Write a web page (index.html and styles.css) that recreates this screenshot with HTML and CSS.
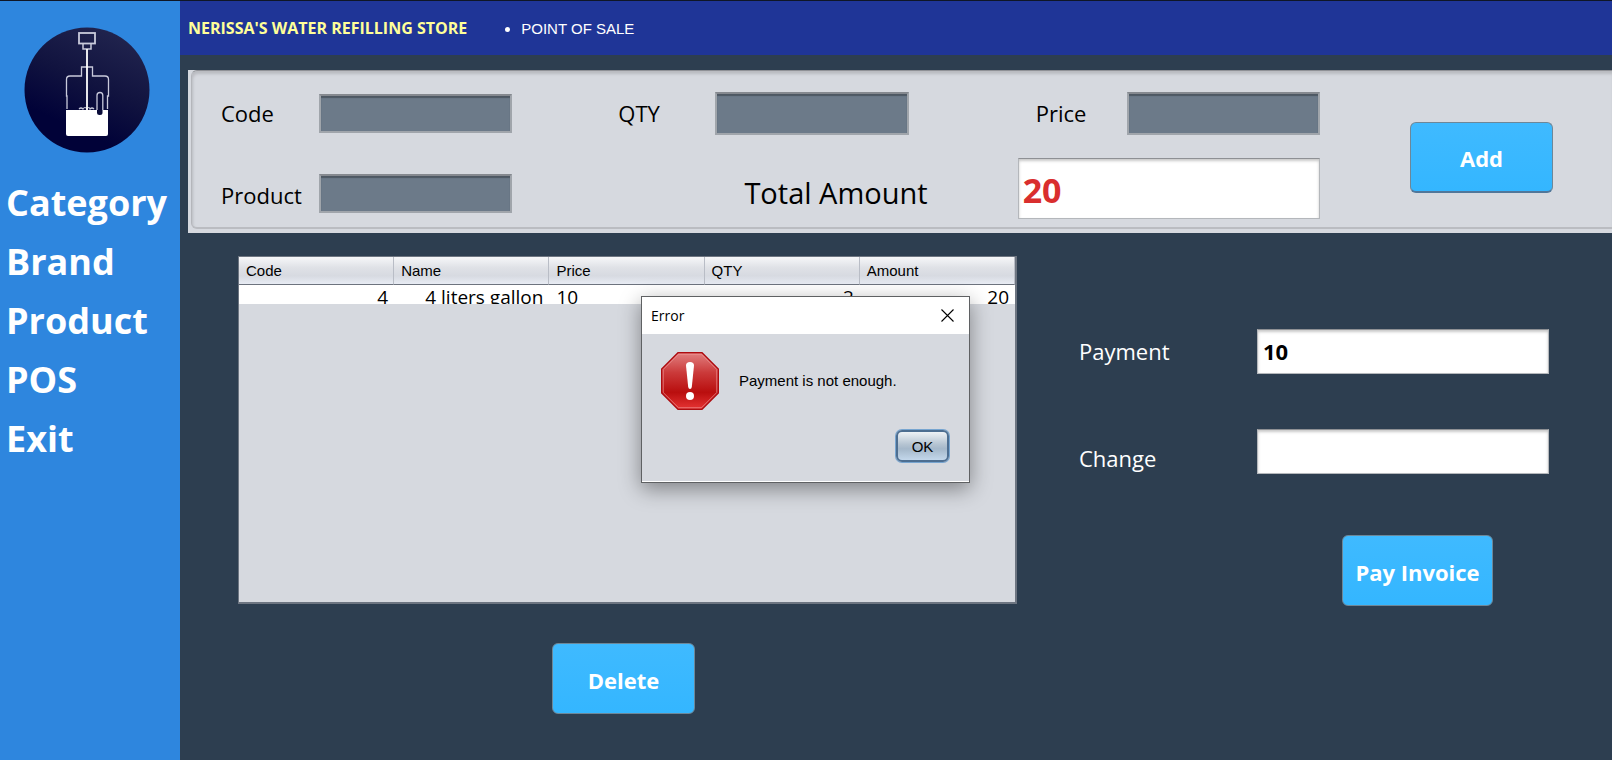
FILE: index.html
```html
<!DOCTYPE html>
<html lang="en">
<head>
<meta charset="utf-8">
<meta name="viewport" content="width=device-width, initial-scale=1">
<title>Nerissa's Water Refilling Store - Point of Sale</title>
<link rel="stylesheet" href="styles.css">
</head>
<body>
<div class="app">
  <aside class="sidebar">
    <svg class="logo" viewBox="0 0 126 126" role="img" aria-label="Water refilling store logo">
      <defs>
        <linearGradient id="disc" x1="0.75" y1="0" x2="0.3" y2="1">
          <stop offset="0" stop-color="#22254f"/>
          <stop offset="0.45" stop-color="#11133f"/>
          <stop offset="0.8" stop-color="#010238"/>
          <stop offset="1" stop-color="#010238"/>
        </linearGradient>
      </defs>
      <circle cx="63" cy="63" r="62.500" fill="url(#disc)"/>
      <g fill="none" stroke="#c9cadb">
        <rect x="55" y="6" width="16" height="10.500" stroke-width="1.800"/>
        <path d="M59 17v5h8v-5" stroke-width="1.500"/>
        <path d="M43 82V69H42.500V52.500Q42.500 49 46 49H57.500V40H68.500V49H81Q84.500 49 84.500 52.500V69H83.500V82" stroke-width="1.300"/>
        <path d="M55 82q2-2 4 0q2-3 4 0q2-3 3 0q2-2 4 0" stroke-width="1.200"/>
      </g>
      <path d="M42 83H84V107Q84 109 82 109H44Q42 109 42 107Z" fill="#fff"/>
      <path d="M63 22V83" stroke="#fff" stroke-width="1.800"/>
      <rect x="73" y="66" width="5.500" height="22" rx="2.500" fill="#090b39"/>
      <path d="M73 83V68.500Q73 65.500 76 65.500Q78.800 65.500 78.800 68.500V83" fill="none" stroke="#c9cadb" stroke-width="1.300"/>
    </svg>
    <nav class="menu">
      <a href="#category">Category</a>
      <a href="#brand">Brand</a>
      <a href="#product">Product</a>
      <a href="#pos">POS</a>
      <a href="#exit">Exit</a>
    </nav>
  </aside>

  <main class="main">
    <header class="topbar">
      <h1 class="store">NERISSA'S WATER REFILLING STORE</h1>
      <ul class="crumbs"><li>POINT OF SALE</li></ul>
    </header>

    <form class="entry">
      <div class="entry-grid">
        <label class="label" for="code">Code</label>
        <input class="box box-dim" id="code" type="text">
        <label class="label col-qty" for="qty">QTY</label>
        <input class="box box-dim box-tall" id="qty" type="text">
        <label class="label col-price" for="price">Price</label>
        <input class="box box-dim box-tall" id="price" type="text">
        <label class="label row-low-label" for="product-name">Product</label>
        <input class="box box-dim row-low" id="product-name" type="text">
        <div class="total">
          <label class="total-label" for="total">Total Amount</label>
          <input class="box box-total" id="total" type="text" value="20">
        </div>
      </div>
      <button class="btn btn-add" type="button">Add</button>
    </form>

    <div class="work">
      <section class="cart">
        <div class="table-pane">
          <table class="items">
            <thead>
              <tr><th>Code</th><th>Name</th><th>Price</th><th>QTY</th><th>Amount</th></tr>
            </thead>
            <tbody>
              <tr>
                <td><div class="cell num">4</div></td>
                <td><div class="cell num">4 liters gallon</div></td>
                <td><div class="cell">10</div></td>
                <td><div class="cell num">2</div></td>
                <td><div class="cell num">20</div></td>
              </tr>
            </tbody>
          </table>
        </div>
        <button class="btn" type="button">Delete</button>
      </section>

      <form class="pay">
        <div class="pay-row">
          <label class="label" for="payment">Payment</label>
          <input class="box box-pay" id="payment" type="text" value="10">
        </div>
        <div class="pay-row pay-change">
          <label class="label" for="change">Change</label>
          <input class="box box-pay" id="change" type="text">
        </div>
        <button class="btn btn-invoice" type="button">Pay Invoice</button>
      </form>
    </div>
  </main>

  <div class="dialog" role="alertdialog" aria-labelledby="dlg-title" aria-describedby="dlg-text">
    <div class="dialog-bar">
      <h2 class="dialog-title" id="dlg-title">Error</h2>
      <button class="dialog-close" type="button" aria-label="Close">
        <svg viewBox="0 0 13 13" width="13" height="13"><path d="M.5.5l12 12M12.500.5l-12 12" stroke="#000" stroke-width="1.100"/></svg>
      </button>
    </div>
    <div class="dialog-body">
      <svg class="dialog-icon" viewBox="0 0 58 58" aria-hidden="true">
        <defs>
          <linearGradient id="red" x1="0" y1="0" x2="0" y2="1">
            <stop offset="0" stop-color="#e18080"/>
            <stop offset="0.35" stop-color="#cb3a3a"/>
            <stop offset="0.7" stop-color="#b90e0e"/>
            <stop offset="1" stop-color="#e63434"/>
          </linearGradient>
        </defs>
        <path d="M17 .7H41L57.300 17V41L41 57.300H17L.7 41V17Z" fill="url(#red)" stroke="#ae0c10" stroke-width="1.400"/>
        <path d="M17.500 2.200H40.500L55.800 17.500V40.500L40.500 55.800H17.500L2.200 40.500V17.500Z" fill="none" stroke="#f09a9a" stroke-opacity=".7"/>
        <path d="M25 13.500Q25 10 29 10Q33 10 33 13.500L30.800 35Q30.500 37 29 37Q27.500 37 27.200 35Z" fill="#fff"/>
        <circle cx="29" cy="44" r="4" fill="#fff"/>
      </svg>
      <p class="dialog-text" id="dlg-text">Payment is not enough.</p>
      <button class="dialog-ok" type="button">OK</button>
    </div>
  </div>
</div>
</body>
</html>
```

FILE: styles.css
```css
* {
  box-sizing: border-box;
}

body {
  margin: 0;
  background: #2d3e50;
  font-family: "Open Sans", "Noto Sans", sans-serif;
  color: #000;
}

button,
input {
  font-family: inherit;
  color: inherit;
}

.app {
  position: relative;
  display: flex;
  min-height: 100vh;
  border-top: 1px solid #0f1626;
}

/* Sidebar */
.sidebar {
  flex: 0 0 180px;
  padding-top: 26px;
  background: #2e86de;
}

.logo {
  display: block;
  width: 126px;
  margin: 0 0 20px 24px;
}

.menu {
  display: flex;
  flex-direction: column;
  padding-left: 6px;
}

.menu a {
  font-size: 36px;
  line-height: 59px;
  font-weight: 700;
  color: #fff;
  text-decoration: none;
}

/* Top bar */
.main {
  flex: 1;
  min-width: 0;
}

.topbar {
  display: flex;
  align-items: center;
  gap: 54px;
  height: 54px;
  padding-left: 8px;
  background: #1f3597;
}

.store {
  margin: 0;
  font-size: 16px;
  font-weight: 700;
  color: #ffff99;
}

.crumbs {
  margin: 0;
  padding: 0;
  font: 15px "Liberation Sans", sans-serif;
  color: #fff;
}

/* Entry panel */
.entry {
  display: flex;
  gap: 90px;
  margin: 15px 0 0 8px;
  padding: 22px 59px 14px 33px;
  position: relative;
  background: #d6d9df;
}

.entry::before {
  content: "";
  position: absolute;
  inset: 0 0 4px 3px;
  border: 1px solid #b4b6bb;
  border-top-color: #8f9196;
  border-right: 0;
  border-bottom: 2px solid #babcc1;
  border-radius: 6px 0 0 6px;
  box-shadow: inset 1px 3px 3px #b9bbc0;
  pointer-events: none;
}

.entry-grid {
  flex: 1;
  min-width: 0;
  display: grid;
  grid-template-columns: 98px minmax(0, 1fr) 203px minmax(0, 1fr) 218px minmax(0, 1fr);
  grid-template-rows: 43px 62px;
  row-gap: 22px;
  align-items: center;
}

.label {
  padding-bottom: 2px;
  font-size: 22px;
  line-height: 30px;
}

.col-qty {
  padding-left: 106px;
}

.col-price {
  padding-left: 127px;
}

.row-low {
  margin-top: 10px;
}

.row-low-label {
  padding-top: 16px;
}

.box {
  display: block;
  width: 100%;
  min-width: 0;
  padding: 0 5px;
  border: 1px solid #b4b7bb;
  border-top-color: #8e9094;
  border-radius: 0;
  outline: 0;
  background: #fff;
  font-weight: 700;
  box-shadow: inset 0 2px 3px #c8c8c8;
}

.box-dim {
  height: 39px;
  border: 2px solid #a0a5ab;
  border-top-color: #85898f;
  background: #6c7a89;
  box-shadow: inset 0 2px 1px #4e5863;
}

.box-tall {
  height: 43px;
}

.total {
  grid-column: 4 / 7;
  display: flex;
  align-items: center;
  justify-content: flex-end;
  gap: 90px;
}

.total-label {
  padding-top: 10px;
  font-size: 29px;
  line-height: 40px;
  white-space: nowrap;
}

.box-total {
  flex: 0 0 50%;
  height: 61px;
  padding: 4px 4px 0;
  font-size: 34px;
  color: #d92e2e;
}

/* Buttons */
.btn {
  width: 143px;
  height: 71px;
  padding: 2px 0 0;
  border: 1px solid #6d8798;
  border-radius: 6px;
  background: linear-gradient(#3fbaff, #34b6ff);
  font-size: 22px;
  font-weight: 700;
  color: #fff;
}

.btn-add {
  align-self: flex-start;
  flex: 0 0 143px;
  margin-top: 30px;
  border-bottom: 2px solid #51779a;
}

.btn-invoice {
  align-self: flex-end;
  width: 151px;
  margin: 60px 56px 0 0;
}

/* Cart and payment */
.work {
  display: grid;
  grid-template-columns: minmax(0, 779fr) minmax(0, 470fr);
  column-gap: 62px;
  padding: 23px 63px 40px 58px;
}

.cart {
  display: flex;
  flex-direction: column;
  align-items: center;
  gap: 39px;
}

.cart .btn {
  margin-right: 8px;
}

.table-pane {
  width: 100%;
  min-height: 348px;
  border: 1px solid #6d7581;
  border-width: 1px 2px 2px 1px;
  background: #d6d9df;
}

.items {
  width: 100%;
  table-layout: fixed;
  border-collapse: separate;
  border-spacing: 0;
}

.items th {
  height: 28px;
  padding: 0 7px;
  border-right: 1px solid #b9bdc6;
  border-bottom: 1px solid #6d737e;
  background: linear-gradient(#f6f7f9, #dfe1e6 40%, #d7dae1 70%, #e8ecf4);
  font: 15px "Liberation Sans", sans-serif;
  text-align: left;
}

.items td {
  padding: 0;
  background: #fff;
}

.cell {
  height: 19px;
  padding: 0 6px 0 7px;
  overflow: hidden;
  font-size: 19px;
  line-height: 24px;
  white-space: nowrap;
}

.num {
  text-align: right;
}

.pay {
  display: flex;
  flex-direction: column;
  padding-top: 73px;
}

.pay-row {
  display: grid;
  grid-template-columns: minmax(0, 178fr) minmax(0, 292fr);
  align-items: center;
  color: #fff;
}

.pay-change {
  margin-top: 53px;
}

.pay-change .label {
  padding-top: 16px;
}

.box-pay {
  height: 45px;
  padding-bottom: 2px;
  font-size: 22px;
  color: #000;
}

/* Error dialog */
.dialog {
  position: absolute;
  left: 641px;
  top: 295px;
  width: 329px;
  border: 1px solid #5f6163;
  background: #d6d9df;
  box-shadow: 0 6px 20px rgba(0, 0, 0, 0.4);
}

.dialog-bar {
  display: flex;
  align-items: center;
  justify-content: space-between;
  height: 37px;
  padding: 0 9px;
  background: #fff;
}

.dialog-title {
  margin: 0;
  font-size: 14px;
  font-weight: 400;
}

.dialog-close {
  display: flex;
  padding: 6px;
  border: 0;
  background: none;
}

.dialog-body {
  display: grid;
  grid-template-columns: 58px 1fr;
  column-gap: 20px;
  align-items: center;
  padding: 18px 20px 19px 19px;
  border-bottom: 1px solid #fff;
}

.dialog-icon {
  width: 58px;
  height: 58px;
}

.dialog-text {
  margin: 0;
  padding-bottom: 2px;
  font: 15px "Liberation Sans", sans-serif;
}

.dialog-ok {
  grid-column: 2;
  justify-self: end;
  width: 53px;
  height: 32px;
  margin-top: 20px;
  padding: 0;
  border: 2px solid #4d6e91;
  border-radius: 6px;
  background: linear-gradient(#eef2f6, #b4c3d1 45%, #a5b8ca 60%, #c3d7eb);
  box-shadow: 0 0 0 1px #77a5d0;
  font: 15px "Liberation Sans", sans-serif;
}
```
